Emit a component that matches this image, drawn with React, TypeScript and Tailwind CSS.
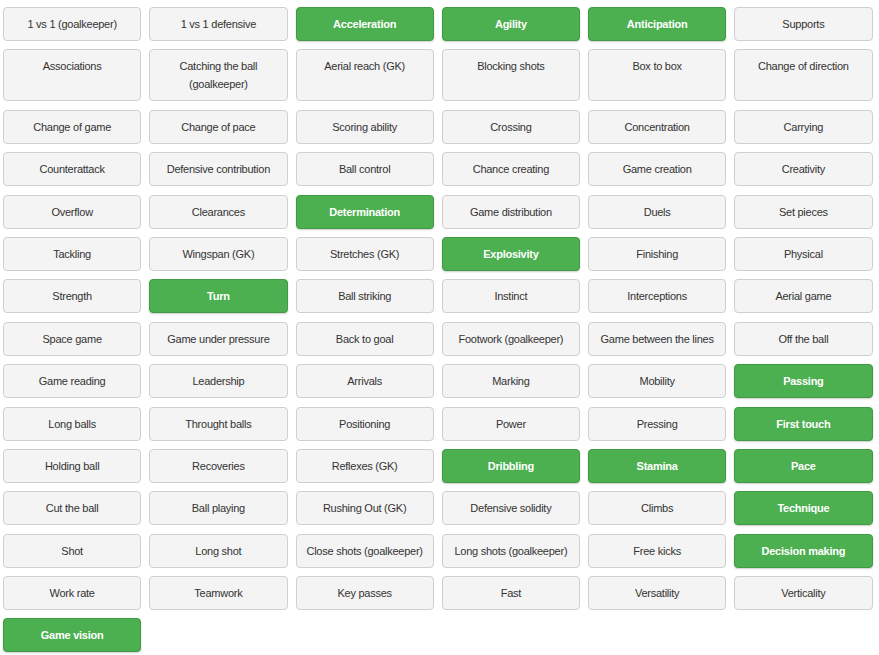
const skills: [string, boolean][] = [
  ["1 vs 1 (goalkeeper)", false],
  ["1 vs 1 defensive", false],
  ["Acceleration", true],
  ["Agility", true],
  ["Anticipation", true],
  ["Supports", false],
  ["Associations", false],
  ["Catching the ball (goalkeeper)", false],
  ["Aerial reach (GK)", false],
  ["Blocking shots", false],
  ["Box to box", false],
  ["Change of direction", false],
  ["Change of game", false],
  ["Change of pace", false],
  ["Scoring ability", false],
  ["Crossing", false],
  ["Concentration", false],
  ["Carrying", false],
  ["Counterattack", false],
  ["Defensive contribution", false],
  ["Ball control", false],
  ["Chance creating", false],
  ["Game creation", false],
  ["Creativity", false],
  ["Overflow", false],
  ["Clearances", false],
  ["Determination", true],
  ["Game distribution", false],
  ["Duels", false],
  ["Set pieces", false],
  ["Tackling", false],
  ["Wingspan (GK)", false],
  ["Stretches (GK)", false],
  ["Explosivity", true],
  ["Finishing", false],
  ["Physical", false],
  ["Strength", false],
  ["Turn", true],
  ["Ball striking", false],
  ["Instinct", false],
  ["Interceptions", false],
  ["Aerial game", false],
  ["Space game", false],
  ["Game under pressure", false],
  ["Back to goal", false],
  ["Footwork (goalkeeper)", false],
  ["Game between the lines", false],
  ["Off the ball", false],
  ["Game reading", false],
  ["Leadership", false],
  ["Arrivals", false],
  ["Marking", false],
  ["Mobility", false],
  ["Passing", true],
  ["Long balls", false],
  ["Throught balls", false],
  ["Positioning", false],
  ["Power", false],
  ["Pressing", false],
  ["First touch", true],
  ["Holding ball", false],
  ["Recoveries", false],
  ["Reflexes (GK)", false],
  ["Dribbling", true],
  ["Stamina", true],
  ["Pace", true],
  ["Cut the ball", false],
  ["Ball playing", false],
  ["Rushing Out (GK)", false],
  ["Defensive solidity", false],
  ["Climbs", false],
  ["Technique", true],
  ["Shot", false],
  ["Long shot", false],
  ["Close shots (goalkeeper)", false],
  ["Long shots (goalkeeper)", false],
  ["Free kicks", false],
  ["Decision making", true],
  ["Work rate", false],
  ["Teamwork", false],
  ["Key passes", false],
  ["Fast", false],
  ["Versatility", false],
  ["Verticality", false],
  ["Game vision", true],
];

function SkillButton({ label, active }: { label: string; active: boolean }) {
  return (
    <button
      className={
        active
          ? "flex justify-center rounded-[4px] border border-[#3f9a43] bg-[#4caf50] px-2 py-[7px] text-[11px] leading-[18px] tracking-[-0.25px] font-bold text-white shadow-[0_1px_2px_rgba(0,0,0,0.2)]"
          : "flex justify-center rounded-[4px] border border-[#cfcfcf] bg-[#f4f4f4] px-2 py-[7px] text-[11px] leading-[18px] tracking-[-0.25px] text-[#333]"
      }
    >
      <span>{label}</span>
    </button>
  );
}

export default function App() {
  return (
    <div
      className="min-h-screen bg-white pt-[7px] pl-[3px]"
      style={{ fontFamily: '"Liberation Sans", Arial, sans-serif' }}
    >
      <div className="grid w-[869.5px] grid-cols-6 gap-x-[8px] gap-y-[8.4px]">
        {skills.map(([label, active]) => (
          <SkillButton key={label} label={label} active={active} />
        ))}
      </div>
    </div>
  );
}
